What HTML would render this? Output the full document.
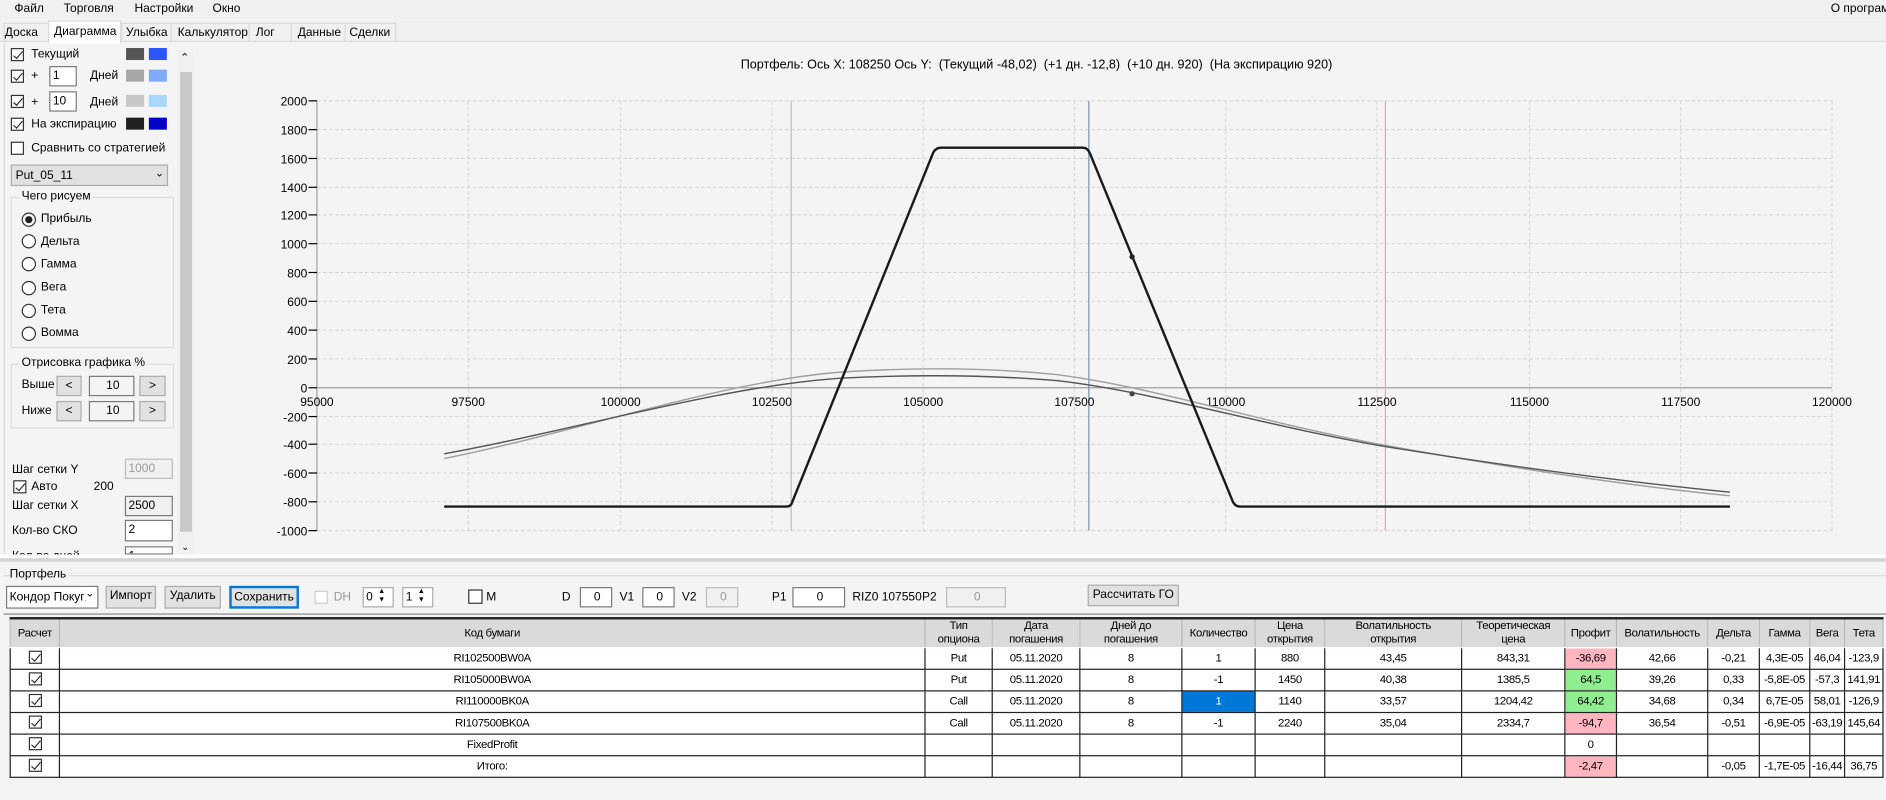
<!DOCTYPE html>
<html><head><meta charset="utf-8"><style>
*{box-sizing:border-box;margin:0;padding:0}
html,body{width:1886px;height:799px;overflow:hidden;background:#f4f4f4}
#w{position:absolute;left:0;top:0;width:1571px;height:666px;transform:scale(1.2005);transform-origin:0 0;font-family:"Liberation Sans",sans-serif;font-size:10px;color:#000;background:#f4f4f4}
.a{position:absolute;white-space:nowrap}
.cb{position:absolute;width:11px;height:11px;border:1px solid #333;background:#fff}
.cb.on::after{content:"";position:absolute;left:3px;top:0px;width:3px;height:7px;border:solid #333;border-width:0 1px 1px 0;transform:rotate(40deg)}
.rb{position:absolute;width:12px;height:12px;border:1px solid #333;border-radius:50%;background:#fff}
.rb.on::after{content:"";position:absolute;left:2px;top:2px;width:6px;height:6px;border-radius:50%;background:#222}
.in{position:absolute;border:1px solid #7a7a7a;background:#fff;padding-left:2px;line-height:15px;font-size:10px}
.dis{border-color:#bcbcbc;background:#f0f0f0;color:#999}
.bt{position:absolute;border:1px solid #adadad;background:#e1e1e1;text-align:center;line-height:16px}
.sw{position:absolute;width:15px;height:10px}
.grp{position:absolute;border:1px solid #dcdcdc}
.grp span{position:absolute;left:6px;top:-7px;background:#f4f4f4;padding:0 2px}
table{position:absolute;left:8px;top:514px;border-collapse:collapse;font-size:9.5px;letter-spacing:-0.3px;border-top:2px solid #222}
td{border:1px solid #222;text-align:center;height:18px;padding:0;background:#fff;overflow:hidden;white-space:nowrap}
tr.h td{background:#dadada;border-color:#fff #b8b8b8;height:24px;line-height:11px}
</style></head><body><div id="w">
<!-- menu -->
<div class="a" style="left:0;top:0;width:1571px;height:16px;background:#f0f0f0"></div>
<div class="a" style="left:12px;top:2px">Файл</div><div class="a" style="left:53px;top:2px">Торговля</div><div class="a" style="left:112px;top:2px">Настройки</div><div class="a" style="left:177px;top:2px">Окно</div><div class="a" style="left:1525px;top:2px">О программе</div>
<!-- tabs -->
<div class="a" style="left:0;top:17px;width:1571px;height:18px;background:#f0f0f0;border-bottom:1px solid #dadada"></div>
<div class="a" style="left:3px;top:19px;width:327px;height:16px;border:1px solid #dadada;border-bottom:none"></div>
<div class="a" style="left:4px;top:22px">Доска</div>
<div class="a" style="left:40px;top:17px;width:61px;height:19px;background:#fff;border:1px solid #dadada;border-bottom:none"></div>
<div class="a" style="left:45px;top:21px">Диаграмма</div>
<div class="a" style="left:101px;top:19px;height:16px;border-left:1px solid #dadada;padding-left:3px;padding-top:3px">Улыбка</div>
<div class="a" style="left:142px;top:19px;height:16px;border-left:1px solid #dadada;padding-left:5px;padding-top:3px">Калькулятор</div>
<div class="a" style="left:207px;top:19px;height:16px;border-left:1px solid #dadada;padding-left:5px;padding-top:3px">Лог</div>
<div class="a" style="left:242px;top:19px;height:16px;border-left:1px solid #dadada;padding-left:5px;padding-top:3px">Данные</div>
<div class="a" style="left:287px;top:19px;height:16px;border-left:1px solid #dadada;padding-left:3px;padding-top:3px">Сделки</div>
<!-- left panel -->
<div class="a" style="left:3px;top:36px;width:159px;height:426px;border-left:1px solid #dadada"></div>
<div class="a" style="left:148px;top:42px;width:13px;height:421px;background:#f0f0f0"></div>
<div class="a" style="left:150px;top:60px;width:10px;height:383px;background:#c9c9c9"></div>
<div class="a" style="left:150px;top:43px;font-size:9px">&#8963;</div>
<div class="a" style="left:151px;top:451px;font-size:8px">&#8964;</div>
<div class="cb on" style="left:9px;top:40px"></div><div class="a" style="left:26px;top:40px">Текущий</div>
<div class="sw" style="left:105px;top:40px;background:#555"></div><div class="sw" style="left:124px;top:40px;background:#2b55ff"></div>
<div class="cb on" style="left:9px;top:58px"></div><div class="a" style="left:26px;top:58px">+</div><div class="in" style="left:41px;top:55px;width:23px;height:17px">1</div><div class="a" style="left:75px;top:58px">Дней</div>
<div class="sw" style="left:105px;top:58px;background:#a8a8a8"></div><div class="sw" style="left:124px;top:58px;background:#80aaff"></div>
<div class="cb on" style="left:9px;top:79px"></div><div class="a" style="left:26px;top:80px">+</div><div class="in" style="left:41px;top:76px;width:23px;height:17px">10</div><div class="a" style="left:75px;top:80px">Дней</div>
<div class="sw" style="left:105px;top:79px;background:#c8c8c8"></div><div class="sw" style="left:124px;top:79px;background:#a8d8ff"></div>
<div class="cb on" style="left:9px;top:98px"></div><div class="a" style="left:26px;top:98px">На экспирацию</div>
<div class="sw" style="left:105px;top:98px;background:#202020"></div><div class="sw" style="left:124px;top:98px;background:#0000c8"></div>
<div class="cb" style="left:9px;top:118px"></div><div class="a" style="left:26px;top:118px">Сравнить со стратегией</div>
<div class="a" style="left:9px;top:137px;width:131px;height:18px;border:1px solid #adadad;background:#e1e1e1;padding:3px 3px">Put_05_11</div><div class="a" style="left:129px;top:139px;font-size:9px">&#8964;</div>
<div class="grp" style="left:9px;top:164px;width:136px;height:126px"><span>Чего рисуем</span></div>
<div class="rb on" style="left:18px;top:177px"></div><div class="a" style="left:34px;top:177px">Прибыль</div>
<div class="rb" style="left:18px;top:195px"></div><div class="a" style="left:34px;top:196px">Дельта</div>
<div class="rb" style="left:18px;top:214px"></div><div class="a" style="left:34px;top:215px">Гамма</div>
<div class="rb" style="left:18px;top:234px"></div><div class="a" style="left:34px;top:234px">Вега</div>
<div class="rb" style="left:18px;top:253px"></div><div class="a" style="left:34px;top:253px">Тета</div>
<div class="rb" style="left:18px;top:272px"></div><div class="a" style="left:34px;top:272px">Вомма</div>
<div class="grp" style="left:9px;top:303px;width:136px;height:54px"><span>Отрисовка графика %</span></div>
<div class="a" style="left:18px;top:315px">Выше</div><div class="bt" style="left:47px;top:313px;width:21px;height:17px">&lt;</div><div class="in" style="left:74px;top:313px;width:38px;height:17px;text-align:center;background:#f4f4f4">10</div><div class="bt" style="left:116px;top:313px;width:22px;height:17px">&gt;</div>
<div class="a" style="left:18px;top:337px">Ниже</div><div class="bt" style="left:47px;top:334px;width:21px;height:17px">&lt;</div><div class="in" style="left:74px;top:334px;width:38px;height:17px;text-align:center;background:#f4f4f4">10</div><div class="bt" style="left:116px;top:334px;width:22px;height:17px">&gt;</div>
<div class="a" style="left:10px;top:386px">Шаг сетки Y</div><div class="in dis" style="left:104px;top:382px;width:40px;height:17px">1000</div>
<div class="cb on" style="left:11px;top:400px"></div><div class="a" style="left:26px;top:400px">Авто</div><div class="a" style="left:78px;top:400px">200</div>
<div class="a" style="left:10px;top:416px">Шаг сетки X</div><div class="in" style="left:104px;top:413px;width:40px;height:17px;background:#f0f0f0">2500</div>
<div class="a" style="left:10px;top:437px">Кол-во СКО</div><div class="in" style="left:104px;top:433px;width:40px;height:18px">2</div>
<div class="a" style="left:10px;top:458px;height:4px;overflow:hidden">Кол-во дней</div><div class="in" style="left:104px;top:455px;width:40px;height:7px;overflow:hidden">1</div>
<!-- chart -->
<div class="a" style="left:617px;top:48px;font-size:10.5px">Портфель: Ось X: 108250 Ось Y:&nbsp; (Текущий -48,02)&nbsp; (+1 дн. -12,8)&nbsp; (+10 дн. 920)&nbsp; (На экспирацию 920)</div>
<svg class="a" style="left:0;top:0" width="1571" height="470" font-family="Liberation Sans" font-size="10">
<g stroke="#d4d4d4" stroke-dasharray="3,2" stroke-width="0.8">
<line x1="264" y1="84" x2="1526" y2="84"/><line x1="264" y1="108" x2="1526" y2="108"/><line x1="264" y1="132" x2="1526" y2="132"/><line x1="264" y1="156" x2="1526" y2="156"/><line x1="264" y1="179" x2="1526" y2="179"/><line x1="264" y1="203" x2="1526" y2="203"/><line x1="264" y1="227" x2="1526" y2="227"/><line x1="264" y1="251" x2="1526" y2="251"/><line x1="264" y1="275" x2="1526" y2="275"/><line x1="264" y1="299" x2="1526" y2="299"/><line x1="264" y1="347" x2="1526" y2="347"/><line x1="264" y1="370" x2="1526" y2="370"/><line x1="264" y1="394" x2="1526" y2="394"/><line x1="264" y1="418" x2="1526" y2="418"/><line x1="264" y1="442" x2="1526" y2="442"/>
<line x1="390" y1="84" x2="390" y2="442"/><line x1="517" y1="84" x2="517" y2="442"/><line x1="643" y1="84" x2="643" y2="442"/><line x1="769" y1="84" x2="769" y2="442"/><line x1="895" y1="84" x2="895" y2="442"/><line x1="1021" y1="84" x2="1021" y2="442"/><line x1="1147" y1="84" x2="1147" y2="442"/><line x1="1274" y1="84" x2="1274" y2="442"/><line x1="1400" y1="84" x2="1400" y2="442"/><line x1="1526" y1="84" x2="1526" y2="442"/>
</g>
<line x1="264" y1="84" x2="264" y2="442" stroke="#a0a0a0"/>
<line x1="264" y1="323" x2="1526" y2="323" stroke="#a0a0a0"/>
<line x1="659" y1="84" x2="659" y2="442" stroke="#b0b0b0" stroke-width="0.8"/>
<line x1="907" y1="84" x2="907" y2="442" stroke="#7d8fa8" stroke-width="1"/>
<line x1="1154" y1="84" x2="1154" y2="442" stroke="#f4a0b0" stroke-width="1"/>
<g stroke="#000"><line x1="257" y1="84" x2="264" y2="84"/><line x1="257" y1="108" x2="264" y2="108"/><line x1="257" y1="132" x2="264" y2="132"/><line x1="257" y1="156" x2="264" y2="156"/><line x1="257" y1="179" x2="264" y2="179"/><line x1="257" y1="203" x2="264" y2="203"/><line x1="257" y1="227" x2="264" y2="227"/><line x1="257" y1="251" x2="264" y2="251"/><line x1="257" y1="275" x2="264" y2="275"/><line x1="257" y1="299" x2="264" y2="299"/><line x1="257" y1="323" x2="264" y2="323"/><line x1="257" y1="347" x2="264" y2="347"/><line x1="257" y1="370" x2="264" y2="370"/><line x1="257" y1="394" x2="264" y2="394"/><line x1="257" y1="418" x2="264" y2="418"/><line x1="257" y1="442" x2="264" y2="442"/></g>
<g text-anchor="end">
<text x="256" y="88">2000</text><text x="256" y="112">1800</text><text x="256" y="136">1600</text><text x="256" y="160">1400</text><text x="256" y="183">1200</text><text x="256" y="207">1000</text><text x="256" y="231">800</text><text x="256" y="255">600</text><text x="256" y="279">400</text><text x="256" y="303">200</text><text x="256" y="327">0</text><text x="256" y="351">-200</text><text x="256" y="374">-400</text><text x="256" y="398">-600</text><text x="256" y="422">-800</text><text x="256" y="446">-1000</text></g>
<g text-anchor="middle">
<text x="264" y="338">95000</text><text x="390" y="338">97500</text><text x="517" y="338">100000</text><text x="643" y="338">102500</text><text x="769" y="338">105000</text><text x="895" y="338">107500</text><text x="1021" y="338">110000</text><text x="1147" y="338">112500</text><text x="1274" y="338">115000</text><text x="1400" y="338">117500</text><text x="1526" y="338">120000</text></g>
<path fill="none" stroke="#a0a0a0" stroke-width="1.2" d="M370 382 C480 360 600 318 700 310 C760 306 820 306 880 312 C960 322 1050 352 1154 371 C1260 390 1360 405 1441 413"/>
<path fill="none" stroke="#555" stroke-width="1.2" d="M370 378 C480 358 600 322 700 315 C760 312 820 312 880 317 C960 326 1050 354 1154 372 C1260 389 1360 402 1441 410"/>
<path d="M370 422 L655 422 Q659 422 660 418 L777 128 Q779 123 784 123 L902 123 Q906 123 908 128 L1027 418 Q1029 422 1033 422 L1441 422" fill="none" stroke="#1a1a1a" stroke-width="2"/>
<circle cx="943" cy="214" r="2.2" fill="#222"/><circle cx="943" cy="328" r="2.2" fill="#444"/>
</svg>
<!-- splitter -->
<div class="a" style="left:0;top:462px;width:1571px;height:3px;background:#fff"></div>
<div class="a" style="left:0;top:465px;width:1571px;height:3px;background:#d4d4d4"></div>
<div class="a" style="left:3px;top:479px;width:1568px;border-top:1px solid #dcdcdc"></div>
<div class="a" style="left:8px;top:473px;background:#f4f4f4;padding-right:2px">Портфель</div>
<!-- toolbar -->
<div class="a" style="left:5px;top:488px;width:77px;height:19px;border:1px solid #7a7a7a;background:#fff;padding:3px 2px;overflow:hidden">Кондор Покуп</div><div class="a" style="left:70px;top:489px;font-size:9px;background:#fff;padding:0 1px">&#8964;</div>
<div class="bt" style="left:88px;top:488px;width:42px;height:19px">Импорт</div>
<div class="bt" style="left:137px;top:488px;width:47px;height:19px">Удалить</div>
<div class="bt" style="left:191px;top:488px;width:58px;height:19px;border:2px solid #0078d7;line-height:15px">Сохранить</div>
<div class="cb" style="left:262px;top:492px;border-color:#ccc"></div><div class="a" style="left:278px;top:492px;color:#999">DH</div>
<div class="in" style="left:302px;top:489px;width:26px;height:17px;border-color:#aaa">0</div><div class="a" style="left:315px;top:490px;font-size:6px;line-height:7px">▲<br>▼</div>
<div class="in" style="left:335px;top:489px;width:26px;height:17px;border-color:#aaa">1</div><div class="a" style="left:348px;top:490px;font-size:6px;line-height:7px">▲<br>▼</div>
<div class="cb" style="left:390px;top:491px;width:12px;height:12px"></div><div class="a" style="left:405px;top:492px">M</div>
<div class="a" style="left:468px;top:492px">D</div><div class="in" style="left:483px;top:489px;width:27px;height:17px;text-align:center">0</div>
<div class="a" style="left:516px;top:492px">V1</div><div class="in" style="left:535px;top:489px;width:27px;height:17px;text-align:center">0</div>
<div class="a" style="left:568px;top:492px">V2</div><div class="in dis" style="left:588px;top:489px;width:27px;height:17px;text-align:center">0</div>
<div class="a" style="left:643px;top:492px">P1</div><div class="in" style="left:660px;top:489px;width:44px;height:17px;text-align:center">0</div>
<div class="a" style="left:710px;top:492px">RIZ0 107550</div>
<div class="a" style="left:768px;top:492px">P2</div><div class="in dis" style="left:788px;top:489px;width:50px;height:17px;text-align:center">0</div>
<div class="bt" style="left:906px;top:487px;width:76px;height:18px">Рассчитать ГО</div>
<div class="a" style="left:3px;top:511px;width:1568px;height:155px;background:#f4f4f4;border-top:1px solid #888"></div>
<table>
<colgroup><col style="width:41px"><col style="width:721px"><col style="width:56px"><col style="width:73px"><col style="width:85px"><col style="width:61px"><col style="width:58px"><col style="width:114px"><col style="width:86px"><col style="width:43px"><col style="width:76px"><col style="width:43px"><col style="width:42px"><col style="width:29px"><col style="width:32px"></colgroup>
<tr class="h"><td>Расчет</td><td>Код бумаги</td><td>Тип<br>опциона</td><td>Дата<br>погашения</td><td>Дней до<br>погашения</td><td>Количество</td><td>Цена<br>открытия</td><td>Волатильность<br>открытия</td><td>Теоретическая<br>цена</td><td>Профит</td><td>Волатильность</td><td>Дельта</td><td>Гамма</td><td>Вега</td><td>Тета</td></tr>
<tr><td><span class="cb on" style="position:relative;display:inline-block;vertical-align:middle"></span></td><td>RI102500BW0A</td><td>Put</td><td>05.11.2020</td><td>8</td><td>1</td><td>880</td><td>43,45</td><td>843,31</td><td style="background:#ffb6c1">-36,69</td><td>42,66</td><td>-0,21</td><td>4,3E-05</td><td>46,04</td><td>-123,9</td></tr>
<tr><td><span class="cb on" style="position:relative;display:inline-block;vertical-align:middle"></span></td><td>RI105000BW0A</td><td>Put</td><td>05.11.2020</td><td>8</td><td>-1</td><td>1450</td><td>40,38</td><td>1385,5</td><td style="background:#90ee90">64,5</td><td>39,26</td><td>0,33</td><td>-5,8E-05</td><td>-57,3</td><td>141,91</td></tr>
<tr><td><span class="cb on" style="position:relative;display:inline-block;vertical-align:middle"></span></td><td>RI110000BK0A</td><td>Call</td><td>05.11.2020</td><td>8</td><td style="background:#0078d7;color:#fff">1</td><td>1140</td><td>33,57</td><td>1204,42</td><td style="background:#90ee90">64,42</td><td>34,68</td><td>0,34</td><td>6,7E-05</td><td>58,01</td><td>-126,9</td></tr>
<tr><td><span class="cb on" style="position:relative;display:inline-block;vertical-align:middle"></span></td><td>RI107500BK0A</td><td>Call</td><td>05.11.2020</td><td>8</td><td>-1</td><td>2240</td><td>35,04</td><td>2334,7</td><td style="background:#ffb6c1">-94,7</td><td>36,54</td><td>-0,51</td><td>-6,9E-05</td><td>-63,19</td><td>145,64</td></tr>
<tr><td><span class="cb on" style="position:relative;display:inline-block;vertical-align:middle"></span></td><td>FixedProfit</td><td></td><td></td><td></td><td></td><td></td><td></td><td></td><td>0</td><td></td><td></td><td></td><td></td><td></td></tr>
<tr><td><span class="cb on" style="position:relative;display:inline-block;vertical-align:middle"></span></td><td>Итого:</td><td></td><td></td><td></td><td></td><td></td><td></td><td></td><td style="background:#ffb6c1">-2,47</td><td></td><td>-0,05</td><td>-1,7E-05</td><td>-16,44</td><td>36,75</td></tr>
</table>
</div></body></html>
